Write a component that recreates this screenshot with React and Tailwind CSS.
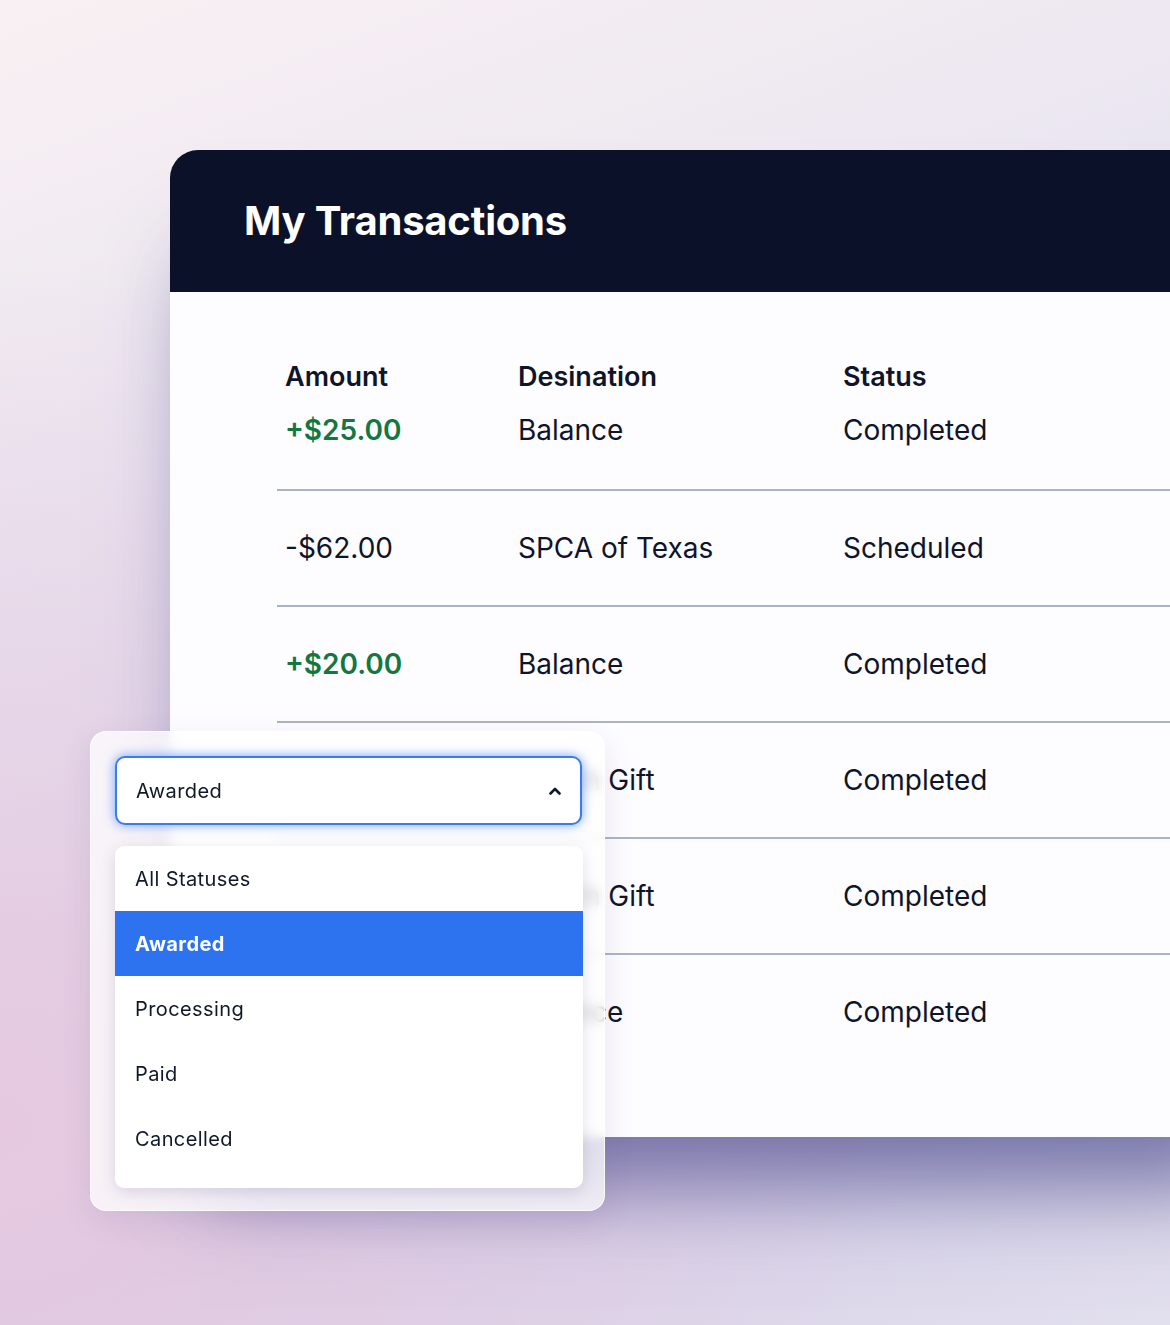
import React from "react";

const rows = [
  { amount: "-$62.00", dest: "SPCA of Texas", status: "Scheduled" },
  { amount: "+$20.00", dest: "Balance", status: "Completed", plus: true },
  { amount: "+$10.00", dest: "Match Gift", status: "Completed", plus: true },
  { amount: "+$15.00", dest: "Match Gift", status: "Completed", plus: true },
  { amount: "+$25.00", dest: "Balance", status: "Completed", plus: true },
];

const options = ["All Statuses", "Awarded", "Processing", "Paid", "Cancelled"];

const Row = ({ amount, dest, status, plus }) => (
  <div className="flex h-[116px] items-center border-t-2 border-[#aab4c3] pl-2 text-[28px] leading-[40px] text-[#0f1429]">
    <span className={`w-[233px] ${plus ? "font-semibold text-[#13783f]" : ""}`}>{amount}</span>
    <span className="w-[325px]">{dest}</span>
    <span>{status}</span>
  </div>
);

export default function App() {
  return (
    <div
      className="relative h-[1325px] w-[1170px] overflow-hidden bg-[radial-gradient(ellipse_at_0%_85%,#e6c9e0_0%,rgba(230,201,224,0)_55%),linear-gradient(160deg,#f9f0f3_0%,#e4e2f0_45%,#d2cbe6_75%,#e2dfee_100%)] pt-[150px] pl-[170px]"
      style={{ fontFamily: "Inter, 'Noto Sans', sans-serif" }}
    >
      {/* Transactions card */}
      <div className="w-[1100px] overflow-hidden rounded-tl-[28px] bg-[#fdfcff] shadow-[0_80px_80px_-30px_rgba(75,75,140,0.7)]">
        <div className="flex h-[142px] items-center bg-[#0a1129] pl-[74px]">
          <h1 className="text-[40px] font-bold tracking-[-0.2px] text-white">My Transactions</h1>
        </div>

        <div className="pl-[107px] pb-[68px]">
          <div className="pt-[65px] pb-[39px] pl-2 text-[28px] leading-[40px] text-[#0f1429]">
            <div className="flex font-semibold">
              <span className="w-[233px] text-[27px]">Amount</span>
              <span className="w-[325px] text-[27px]">Desination</span>
              <span className="text-[27px]">Status</span>
            </div>
            <div className="mt-[13px] flex">
              <span className="w-[233px] font-semibold text-[#13783f]">+$25.00</span>
              <span className="w-[325px]">Balance</span>
              <span>Completed</span>
            </div>
          </div>
          {rows.map((r, i) => (
            <Row key={i} {...r} />
          ))}
        </div>
      </div>

      {/* Status filter overlay */}
      <div className="absolute left-[90px] top-[731px] h-[480px] w-[515px] rounded-[16px] border border-white/80 bg-white/75 px-[24px] pt-[24px] shadow-[0_10px_30px_rgba(90,70,140,0.12)] backdrop-blur-[6px]">
        <div className="flex h-[69px] w-[467px] items-center justify-between rounded-[10px] border-2 border-[#3a7bf3] bg-white pl-[19px] pr-[17px] shadow-[0_0_12px_rgba(59,125,245,0.7)]">
          <span className="text-[20px] tracking-[0.4px] text-[#111827]">Awarded</span>
          <svg width="16" height="16" viewBox="0 0 16 16" fill="none">
            <path d="M3.5 10.5L8 6L12.5 10.5" stroke="#111827" strokeWidth="2.6" strokeLinecap="round" strokeLinejoin="round" />
          </svg>
        </div>

        <div className="mt-[21px] w-[468px] overflow-hidden rounded-[9px] bg-white pb-[17px] shadow-[0_4px_16px_rgba(60,50,110,0.16)]">
          {options.map((o) => (
            <div
              key={o}
              className={`flex h-[65px] items-center pl-[20px] text-[20px] tracking-[0.4px] ${
                o === "Awarded" ? "bg-[#2d73f0] font-bold text-white" : "text-[#111827]"
              }`}
            >
              {o}
            </div>
          ))}
        </div>
      </div>
    </div>
  );
}
